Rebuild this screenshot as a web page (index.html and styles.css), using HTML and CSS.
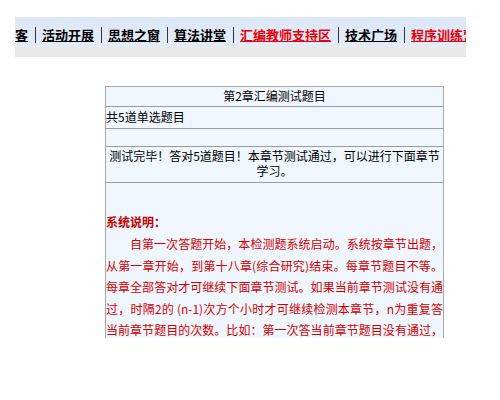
FILE: index.html
```html
<!DOCTYPE html>
<html lang="zh-CN">
<head>
<meta charset="utf-8">
<title>第2章汇编测试题目</title>
<link rel="stylesheet" href="styles.css">
</head>
<body>
<div class="nav">
  <a class="link" href="#">客</a><span class="sep"></span>
  <a class="link" href="#">活动开展</a><span class="sep"></span>
  <a class="link" href="#">思想之窗</a><span class="sep"></span>
  <a class="link" href="#">算法讲堂</a><span class="sep"></span>
  <a class="link red" href="#">汇编教师支持区</a><span class="sep"></span>
  <a class="link" href="#">技术广场</a><span class="sep"></span>
  <a class="link red" href="#">程序训练营</a>
</div>
<div class="clip">
  <div class="panel">
    <div class="row row-title">第2章汇编测试题目</div>
    <div class="row row-count">共5道单选题目</div>
    <div class="row row-empty"></div>
    <div class="row row-result">测试完毕！答对5道题目！本章节测试通过，可以进行下面章节<br>学习。</div>
    <div class="row row-notes">
      <div class="notes-title">系统说明：</div>
      <p class="notes-text">自第一次答题开始，本检测题系统启动。系统按章节出题，<br>从第一章开始，到第十八章(综合研究)结束。每章节题目不等。<br>每章全部答对才可继续下面章节测试。如果当前章节测试没有通<br>过，时隔2的 (n-1)次方个小时才可继续检测本章节，n为重复答<br>当前章节题目的次数。比如：第一次答当前章节题目没有通过，</p>
    </div>
  </div>
</div>
</body>
</html>
```

FILE: styles.css
```css
body {
  margin: 0;
  background: #ffffff;
  font-family: "Noto Sans CJK SC", "Liberation Sans", sans-serif;
  color: #000;
}

.nav {
  margin: 17px 0 0 15px;
  width: 451px;
  height: 40px;
  box-sizing: border-box;
  padding-bottom: 5px;
  display: flex;
  align-items: center;
  overflow: hidden;
  white-space: nowrap;
  background: linear-gradient(to bottom, #dce7f6 0%, #e2ebf8 70%, #e8e9ec 75%, #e9e9e9 100%);
}

.link {
  flex-shrink: 0;
  font-size: 13px;
  line-height: 16px;
  font-weight: bold;
  color: #000;
  text-decoration: underline;
}

.link.red {
  color: #e8000b;
}

.sep {
  flex-shrink: 0;
  width: 14px;
  height: 16px;
  display: flex;
  justify-content: center;
}

.sep::before {
  content: "";
  width: 1px;
  height: 16px;
  background: #333;
}

.clip {
  margin: 29px 0 0 105px;
  width: 339px;
  height: 252px;
  overflow: hidden;
}

.panel {
  width: 337px;
  border: 1px solid #a9a9a9;
  background: #eff6fe;
}

.row {
  border-top: 1px solid #9c9c9c;
  font-size: 12px;
  line-height: 14px;
}

.row:first-child {
  border-top: none;
}

.row-title {
  padding: 2px 0 3px;
  text-align: center;
}

.row-count {
  padding: 3px 0 4px;
}

.row-empty {
  height: 17px;
}

.row-result {
  padding: 1px 0 4px;
  line-height: 15px;
  text-align: center;
  white-space: nowrap;
}

.row-notes {
  padding: 28px 0 30px;
}

.notes-title {
  font-weight: bold;
  color: #c00000;
  line-height: 21px;
  margin-bottom: 1px;
}

.notes-text {
  margin: 0;
  color: #d40000;
  line-height: 21.5px;
  text-indent: 24px;
  text-align: justify;
  text-align-last: justify;
}
```
